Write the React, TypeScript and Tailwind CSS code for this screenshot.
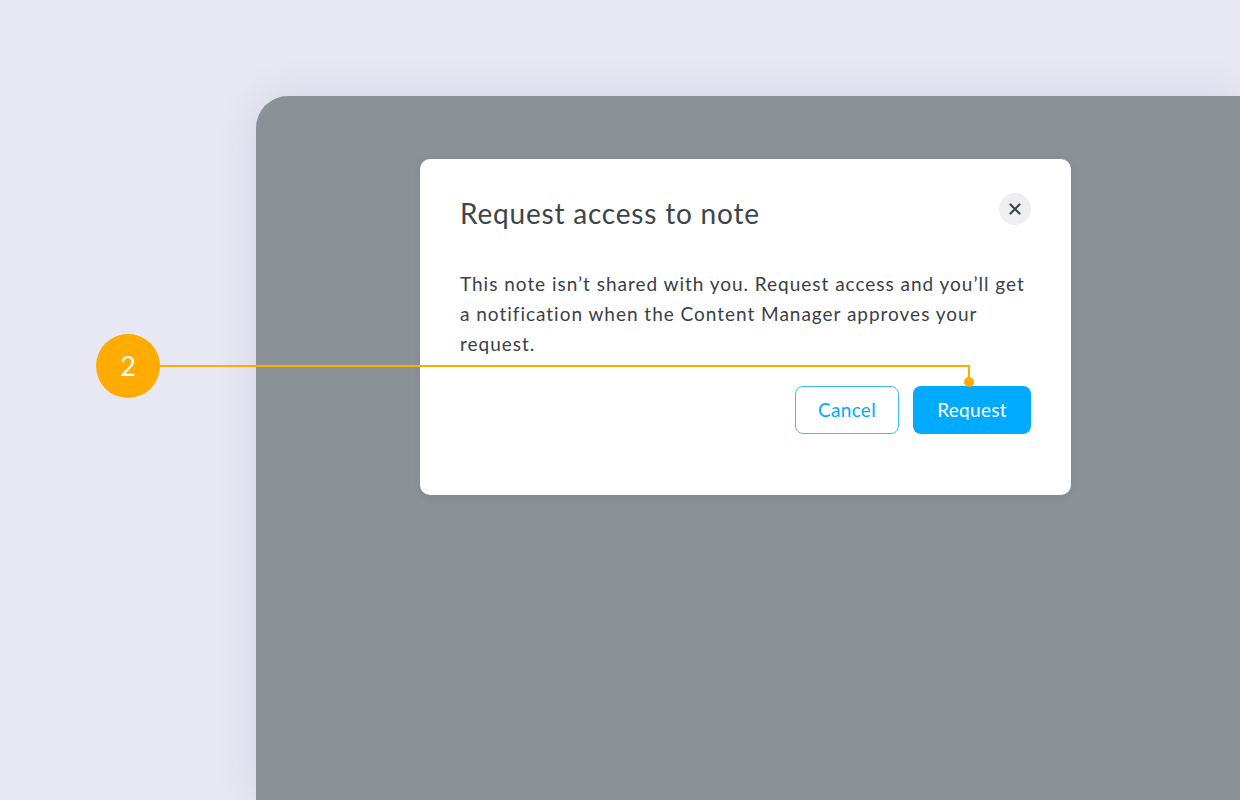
import { X } from 'lucide-react';

const Callout: React.FC = () => (
  <div className="pointer-events-none absolute left-[96px] top-[334px]">
    <div className="flex h-[64px] w-[64px] items-center justify-center rounded-full bg-[#ffab00] text-[27px] text-white font-['Lato',sans-serif]">
      2
    </div>
    <div className="absolute left-[64px] top-[31px] h-[2px] w-[810px] bg-[#ffab00]" />
    <div className="absolute left-[872px] top-[31px] h-[17px] w-[2px] bg-[#ffab00]" />
    <div className="absolute left-[868px] top-[43px] h-[10px] w-[10px] rounded-full bg-[#ffab00]" />
  </div>
);

const App: React.FC = () => {
  return (
    <div className="relative h-[800px] w-[1240px] overflow-hidden bg-[#e8e8f4] font-['Lato',sans-serif]">
      <div className="pl-[256px] pt-[96px]">
        <section className="h-[704px] rounded-tl-[32px] bg-[#8a9298] pl-[164px] pt-[63px] shadow-[0_0_40px_rgba(60,60,110,0.12)]">
          <div className="w-[651px] rounded-[10px] bg-white px-[40px] pb-[61px] pt-[34px] shadow-[0_2px_8px_rgba(0,0,0,0.08)]">
            <div className="flex items-center justify-between">
              <h3 className="text-[28px] leading-[40px] tracking-[0.8px] text-[#3e454a]">Request access to note</h3>
              <button className="flex h-[32px] w-[32px] -translate-y-[4px] items-center justify-center rounded-full bg-[#efeff1] text-[#3e454a]">
                <X size={18} strokeWidth={3} />
              </button>
            </div>
            <p className="mt-[36px] whitespace-nowrap text-[19px] leading-[30px] tracking-[0.98px] text-[#3a4146]">
              This note isn’t shared with you. Request access and you’ll get
              <br />
              a notification when the Content Manager approves your
              <br />
              request.
            </p>
            <div className="mt-[27px] flex justify-end gap-[14px]">
              <button className="h-[48px] w-[104px] rounded-[8px] border border-[#3dbbff] bg-white text-[19px] tracking-[0.3px] text-[#00aaff]">
                Cancel
              </button>
              <button className="h-[48px] w-[118px] rounded-[8px] bg-[#00aaff] text-[19px] tracking-[0.3px] text-white">
                Request
              </button>
            </div>
          </div>
        </section>
      </div>
      <Callout />
    </div>
  );
};

export default App;
